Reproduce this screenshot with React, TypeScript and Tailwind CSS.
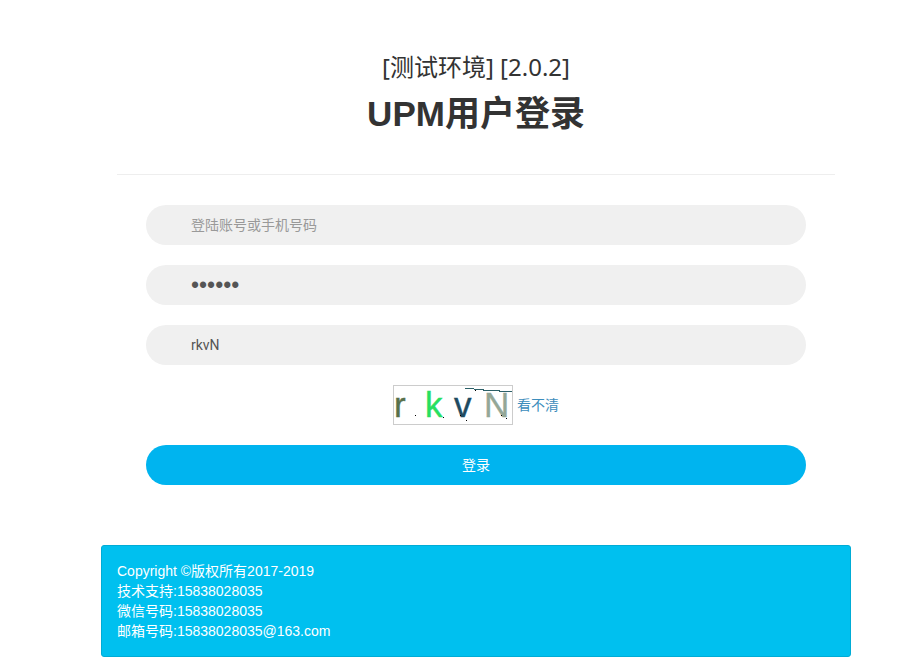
import { useState } from "react";

const fieldClass =
  "block h-10 w-full rounded-full bg-[#f0f0f0] px-[45px] text-[#555] outline-none placeholder:text-[#999]";
const textFieldFont = "text-sm font-['Roboto','Noto_Sans_CJK_SC',sans-serif]";

function Captcha() {
  return (
    <svg
      role="img"
      aria-label="rkvN"
      viewBox="0 0 118 38"
      className="h-10 w-[120px] shrink-0 border border-[#ccc] bg-white font-['Liberation_Sans',sans-serif]"
      strokeWidth="0.4"
    >
      <text x="0" y="31" fontSize="35" fill="#57704a" stroke="#57704a">r</text>
      <text x="31" y="31" fontSize="35" fill="#27df60" stroke="#27df60">k</text>
      <text x="60" y="31" fontSize="35" fill="#1e4a60" stroke="#1e4a60">v</text>
      <text x="90" y="31" fontSize="35" fill="#94a797" stroke="#94a797">N</text>
      <path
        d="M71 2.5h9M80 3.5h10M89 4.5h17M105 5.5h13"
        fill="none"
        stroke="#2c6068"
        strokeWidth="1"
        shapeRendering="crispEdges"
      />
      <path
        d="M21 29h1v1h-1zM49 31h1v1h-1zM66 29h1v1h-1zM72 34h1v1h-1zM81 4h1v1h-1zM107 29h1v1h-1zM112 32h1v1h-1z"
        fill="#000"
        shapeRendering="crispEdges"
      />
    </svg>
  );
}

export default function App() {
  const [account, setAccount] = useState("");
  const [password, setPassword] = useState("123456");
  const [code, setCode] = useState("rkvN");

  return (
    <main className="bg-white pr-[68px] pl-[101px] font-['Liberation_Sans','Noto_Sans_CJK_SC',sans-serif] text-sm text-[#333]">
      <header className="mx-4 border-b border-[#eee] pt-12 pb-8 text-center">
        <p className="font-['Noto_Sans','Noto_Sans_CJK_SC',sans-serif] text-2xl leading-[38px]">
          [测试环境] [2.0.2]
        </p>
        <h1 className="text-[35px] leading-14 font-bold">UPM用户登录</h1>
      </header>

      <form
        className="mx-[45px] mt-[30px] flex flex-col gap-5"
        onSubmit={(e) => e.preventDefault()}
      >
        <input
          aria-label="登陆账号或手机号码"
          placeholder="登陆账号或手机号码"
          value={account}
          onChange={(e) => setAccount(e.target.value)}
          className={`${fieldClass} ${textFieldFont}`}
        />
        <input
          type="password"
          aria-label="密码"
          value={password}
          onChange={(e) => setPassword(e.target.value)}
          className={`${fieldClass} text-[23px]`}
        />
        <input
          aria-label="验证码"
          value={code}
          onChange={(e) => setCode(e.target.value)}
          className={`${fieldClass} ${textFieldFont}`}
        />
        <div className="flex items-center justify-center gap-1">
          <Captcha />
          <a href="#captcha" className="leading-5 text-[#3c8dbc]">看不清</a>
        </div>
        <button type="submit" className="h-10 rounded-full bg-[#00b4ef] text-white">
          登录
        </button>
      </form>

      <footer className="mt-[60px] rounded-[3px] border border-[#00acd6] bg-[#00c0ef] p-[15px] leading-5 text-white">
        <p>Copyright ©版权所有2017-2019</p>
        <p>技术支持:15838028035</p>
        <p>微信号码:15838028035</p>
        <p>邮箱号码:15838028035@163.com</p>
      </footer>
    </main>
  );
}
